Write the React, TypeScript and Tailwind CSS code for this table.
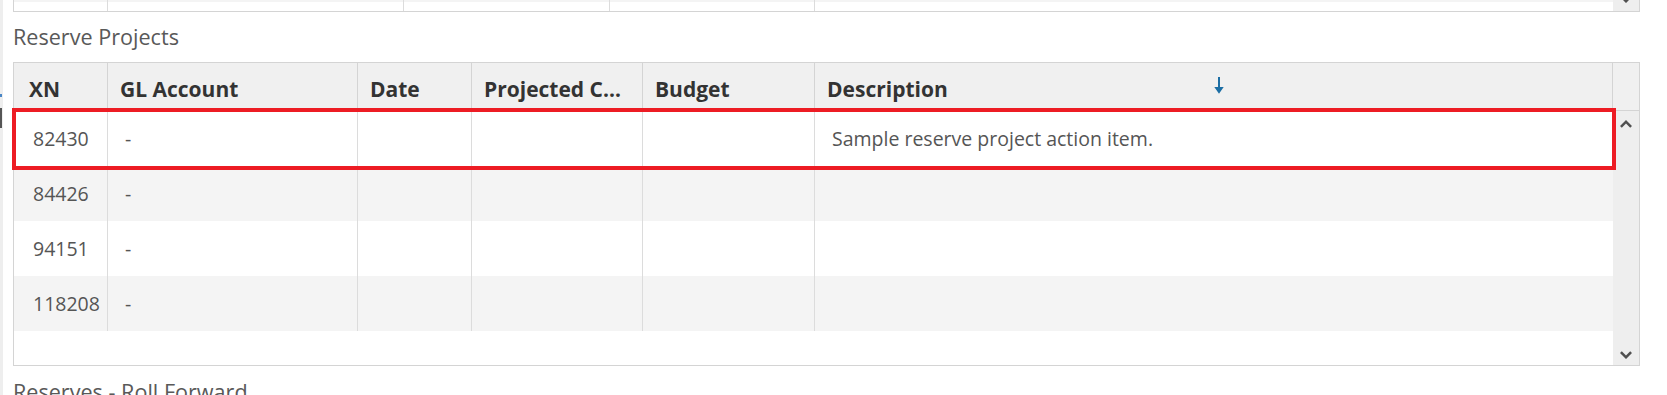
import React from "react";

type Row = { xn: string; gl: string; date?: string; cost?: string; budget?: string; desc?: string };

const rows: Row[] = [
  { xn: "82430", gl: "-", desc: "Sample reserve project action item." },
  { xn: "84426", gl: "-" },
  { xn: "94151", gl: "-" },
  { xn: "118208", gl: "-" },
];

const cols = "grid grid-cols-[94px_250px_114px_171px_172px_1fr]";

function Chevron({ down = false }: { down?: boolean }) {
  return (
    <svg width="12" height="8" viewBox="0 0 12 8" className={down ? "rotate-180" : ""}>
      <path d="M0 6 L6 0 L12 6 L10.2 7.8 L6 3.6 L1.8 7.8 Z" fill="#505050" />
    </svg>
  );
}

function SortArrow() {
  return (
    <svg width="10" height="17" viewBox="0 0 10 17">
      <path d="M4 0h2v11H4z M0.3 10h9.4L5 16.8z" fill="#1c6ea4" />
    </svg>
  );
}

// tail end of the table above, scrolled mostly out of view
function PrevTable() {
  return (
    <div className="flex border-x border-b border-[#d4d4d4]">
      <div className="flex-1 flex flex-col">
        <div className="h-[2px] bg-[#f4f4f4] grid grid-cols-[94px_296px_206px_205px_1fr]">
          <div className="border-r border-[#dcdcdc]" />
          <div className="border-r border-[#dcdcdc]" />
          <div className="border-r border-[#dcdcdc]" />
          <div className="border-r border-[#dcdcdc]" />
          <div />
        </div>
        <div className="h-[9px] bg-white grid grid-cols-[94px_296px_206px_205px_1fr]">
          <div className="border-r border-[#dcdcdc]" />
          <div className="border-r border-[#dcdcdc]" />
          <div className="border-r border-[#dcdcdc]" />
          <div className="border-r border-[#dcdcdc]" />
          <div />
        </div>
      </div>
      <div className="w-[26px] h-[11px] bg-[#eeeeee] overflow-hidden flex justify-center">
        <div className="mt-[-5px]">
          <Chevron down />
        </div>
      </div>
    </div>
  );
}

function ReserveTable() {
  const headers = ["XN", "GL Account", "Date", "Projected Cost", "Budget", "Description"];
  return (
    <div className="relative border border-[#d4d4d4] bg-white">
      <div className="flex h-[48px] border-b border-[#d4d4d4] bg-[#f0f0f0]">
        <div className={`${cols} flex-1`}>
          {headers.map((h, i) => (
            <div
              key={h}
              className={`relative truncate pt-[12px] pr-[16px] text-[21px] leading-[28px] font-bold text-[#333333] ${
                i === 0 ? "pl-[15px]" : "pl-[12px]"
              } ${i < 5 ? "border-r border-[#d4d4d4]" : ""}`}
            >
              {h}
              {h === "Description" && (
                <span className="absolute left-[399px] top-[14px]">
                  <SortArrow />
                </span>
              )}
            </div>
          ))}
        </div>
        <div className="w-[27px] border-l border-[#d4d4d4]" />
      </div>

      <div className="flex h-[254px]">
        <div className="flex-1 flex flex-col">
          {rows.map((r, i) => (
            <div
              key={r.xn}
              className={`${cols} h-[55px] text-[19.5px] leading-[28px] text-[#555555] ${
                i % 2 === 1 ? "bg-[#f4f4f4]" : "bg-white"
              }`}
            >
              <div className="flex items-center pl-[19px] border-r border-[#dcdcdc]">{r.xn}</div>
              <div className="flex items-center pl-[17px] border-r border-[#dcdcdc]">{r.gl}</div>
              <div className="flex items-center pl-[17px] border-r border-[#dcdcdc]">{r.date}</div>
              <div className="flex items-center pl-[17px] border-r border-[#dcdcdc]">{r.cost}</div>
              <div className="flex items-center pl-[17px] border-r border-[#dcdcdc]">{r.budget}</div>
              <div className="flex items-center pl-[17px]">{r.desc}</div>
            </div>
          ))}
        </div>
        <div className="w-[26px] bg-[#eeeeee] flex flex-col items-center justify-between pt-[9px] pb-[6px]">
          <Chevron />
          <Chevron down />
        </div>
      </div>

      {/* highlighted row */}
      <div className="absolute left-[-2px] top-[45px] w-[1604px] h-[62px] border-4 border-[#ed1c24] pointer-events-none" />
    </div>
  );
}

export default function App() {
  return (
    <div className="flex h-[395px] overflow-hidden bg-white font-['Open_Sans','Liberation_Sans',sans-serif]">
      <div className="w-[3px] shrink-0 bg-[#eeeeee] flex flex-col">
        <div className="mt-[94px] h-[3px] w-[2px] bg-[#4a86c5]" />
        <div className="mt-[11px] h-[20px] w-[2px] bg-[#555555]" />
      </div>

      <div className="flex-1 pl-[10px] pr-[27px]">
        <PrevTable />

        <h3 className="mt-[11px] mb-[11px] text-[21.6px] leading-[28px] font-normal text-[#595959]">Reserve Projects</h3>
        <ReserveTable />

        <h3 className="mt-[12px] text-[21.6px] leading-[28px] font-normal text-[#595959]">Reserves - Roll Forward</h3>
      </div>
    </div>
  );
}
